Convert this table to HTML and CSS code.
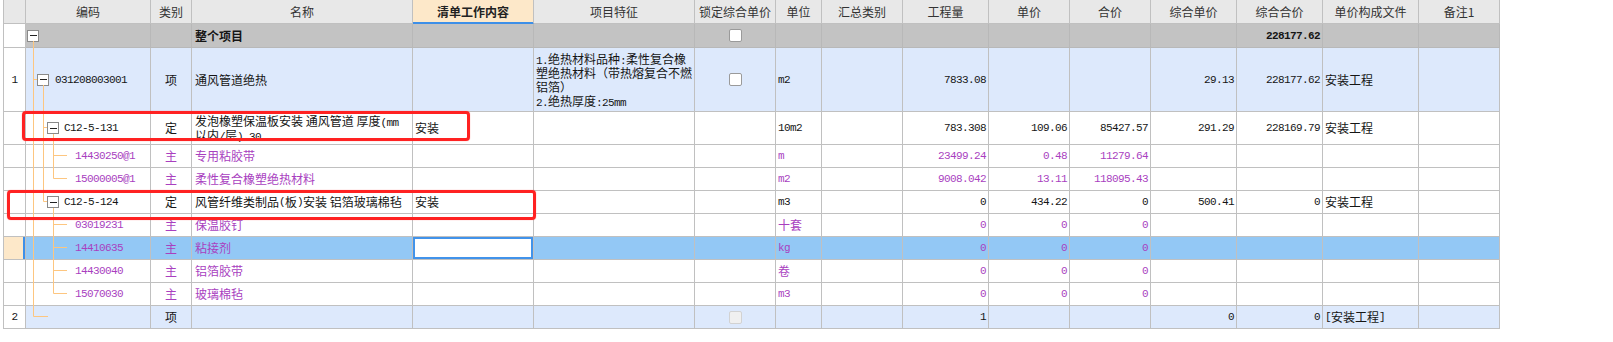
FILE: index.html
```html
<!DOCTYPE html>
<html lang="zh-CN">
<head>
<meta charset="utf-8">
<title>分部分项</title>
<link rel="stylesheet" href="styles.css">
</head>
<body>
<div class="sheet">
  <div class="table">
    <div class="row hdr">
      <div class="c no"></div>
      <div class="c ctr">编码</div>
      <div class="c ctr">类别</div>
      <div class="c ctr">名称</div>
      <div class="c ctr active">清单工作内容</div>
      <div class="c ctr">项目特征</div>
      <div class="c ctr">锁定综合单价</div>
      <div class="c ctr">单位</div>
      <div class="c ctr">汇总类别</div>
      <div class="c ctr">工程量</div>
      <div class="c ctr">单价</div>
      <div class="c ctr">合价</div>
      <div class="c ctr">综合单价</div>
      <div class="c ctr">综合合价</div>
      <div class="c ctr">单价构成文件</div>
      <div class="c ctr">备注1</div>
    </div>

    <div class="row gray">
      <div class="c no"></div>
      <div class="c code"><span class="tg l0"></span></div>
      <div class="c"></div>
      <div class="c name b">整个项目</div>
      <div class="c"></div>
      <div class="c"></div>
      <div class="c ctr"><span class="cb"></span></div>
      <div class="c"></div>
      <div class="c"></div>
      <div class="c"></div>
      <div class="c"></div>
      <div class="c"></div>
      <div class="c"></div>
      <div class="c r b"><span class="n">228177.62</span></div>
      <div class="c"></div>
      <div class="c"></div>
    </div>

    <div class="row blue tall">
      <div class="c no"><span class="n">1</span></div>
      <div class="c code"><span class="tg l1"></span><span class="n t1">031208003001</span></div>
      <div class="c ctr">项</div>
      <div class="c name">通风管道绝热</div>
      <div class="c"></div>
      <div class="c"><div class="ml"><span class="n">1.</span>绝热材料品种<span class="n">:</span>柔性复合橡<br>塑绝热材料（带热熔复合不燃<br>铝箔）<br><span class="n">2.</span>绝热厚度<span class="n">:25mm</span></div></div>
      <div class="c ctr"><span class="cb"></span></div>
      <div class="c"><span class="n">m2</span></div>
      <div class="c"></div>
      <div class="c r"><span class="n">7833.08</span></div>
      <div class="c"></div>
      <div class="c"></div>
      <div class="c r"><span class="n">29.13</span></div>
      <div class="c r"><span class="n">228177.62</span></div>
      <div class="c">安装工程</div>
      <div class="c"></div>
    </div>

    <div class="row mid">
      <div class="c no"></div>
      <div class="c code"><span class="tg l2"></span><span class="n t2">C12-5-131</span></div>
      <div class="c ctr">定</div>
      <div class="c name"><div class="ml">发泡橡塑保温板安装 通风管道 厚度<span class="n">(mm</span><br>以内<span class="n">/</span>层<span class="n">) 30</span></div></div>
      <div class="c">安装</div>
      <div class="c"></div>
      <div class="c"></div>
      <div class="c"><span class="n">10m2</span></div>
      <div class="c"></div>
      <div class="c r"><span class="n">783.308</span></div>
      <div class="c r"><span class="n">109.06</span></div>
      <div class="c r"><span class="n">85427.57</span></div>
      <div class="c r"><span class="n">291.29</span></div>
      <div class="c r"><span class="n">228169.79</span></div>
      <div class="c">安装工程</div>
      <div class="c"></div>
    </div>

    <div class="row mat">
      <div class="c no"></div>
      <div class="c code leaf"><span class="n">14430250@1</span></div>
      <div class="c ctr">主</div>
      <div class="c name">专用粘胶带</div>
      <div class="c"></div>
      <div class="c"></div>
      <div class="c"></div>
      <div class="c"><span class="n">m</span></div>
      <div class="c"></div>
      <div class="c r"><span class="n">23499.24</span></div>
      <div class="c r"><span class="n">0.48</span></div>
      <div class="c r"><span class="n">11279.64</span></div>
      <div class="c"></div>
      <div class="c"></div>
      <div class="c"></div>
      <div class="c"></div>
    </div>

    <div class="row mat">
      <div class="c no"></div>
      <div class="c code leaf"><span class="n">15000005@1</span></div>
      <div class="c ctr">主</div>
      <div class="c name">柔性复合橡塑绝热材料</div>
      <div class="c"></div>
      <div class="c"></div>
      <div class="c"></div>
      <div class="c"><span class="n">m2</span></div>
      <div class="c"></div>
      <div class="c r"><span class="n">9008.042</span></div>
      <div class="c r"><span class="n">13.11</span></div>
      <div class="c r"><span class="n">118095.43</span></div>
      <div class="c"></div>
      <div class="c"></div>
      <div class="c"></div>
      <div class="c"></div>
    </div>

    <div class="row">
      <div class="c no"></div>
      <div class="c code"><span class="tg l2"></span><span class="n t2">C12-5-124</span></div>
      <div class="c ctr">定</div>
      <div class="c name">风管纤维类制品<span class="n">(</span>板<span class="n">)</span>安装 铝箔玻璃棉毡</div>
      <div class="c">安装</div>
      <div class="c"></div>
      <div class="c"></div>
      <div class="c"><span class="n">m3</span></div>
      <div class="c"></div>
      <div class="c r"><span class="n">0</span></div>
      <div class="c r"><span class="n">434.22</span></div>
      <div class="c r"><span class="n">0</span></div>
      <div class="c r"><span class="n">500.41</span></div>
      <div class="c r"><span class="n">0</span></div>
      <div class="c">安装工程</div>
      <div class="c"></div>
    </div>

    <div class="row mat">
      <div class="c no"></div>
      <div class="c code leaf"><span class="n">03019231</span></div>
      <div class="c ctr">主</div>
      <div class="c name">保温胶钉</div>
      <div class="c"></div>
      <div class="c"></div>
      <div class="c"></div>
      <div class="c">十套</div>
      <div class="c"></div>
      <div class="c r"><span class="n">0</span></div>
      <div class="c r"><span class="n">0</span></div>
      <div class="c r"><span class="n">0</span></div>
      <div class="c"></div>
      <div class="c"></div>
      <div class="c"></div>
      <div class="c"></div>
    </div>

    <div class="row mat sel">
      <div class="c no"></div>
      <div class="c code leaf"><span class="n">14410635</span></div>
      <div class="c ctr">主</div>
      <div class="c name">粘接剂</div>
      <div class="c edit"></div>
      <div class="c"></div>
      <div class="c"></div>
      <div class="c"><span class="n">kg</span></div>
      <div class="c"></div>
      <div class="c r"><span class="n">0</span></div>
      <div class="c r"><span class="n">0</span></div>
      <div class="c r"><span class="n">0</span></div>
      <div class="c"></div>
      <div class="c"></div>
      <div class="c"></div>
      <div class="c"></div>
    </div>

    <div class="row mat">
      <div class="c no"></div>
      <div class="c code leaf"><span class="n">14430040</span></div>
      <div class="c ctr">主</div>
      <div class="c name">铝箔胶带</div>
      <div class="c"></div>
      <div class="c"></div>
      <div class="c"></div>
      <div class="c">卷</div>
      <div class="c"></div>
      <div class="c r"><span class="n">0</span></div>
      <div class="c r"><span class="n">0</span></div>
      <div class="c r"><span class="n">0</span></div>
      <div class="c"></div>
      <div class="c"></div>
      <div class="c"></div>
      <div class="c"></div>
    </div>

    <div class="row mat">
      <div class="c no"></div>
      <div class="c code leaf"><span class="n">15070030</span></div>
      <div class="c ctr">主</div>
      <div class="c name">玻璃棉毡</div>
      <div class="c"></div>
      <div class="c"></div>
      <div class="c"></div>
      <div class="c"><span class="n">m3</span></div>
      <div class="c"></div>
      <div class="c r"><span class="n">0</span></div>
      <div class="c r"><span class="n">0</span></div>
      <div class="c r"><span class="n">0</span></div>
      <div class="c"></div>
      <div class="c"></div>
      <div class="c"></div>
      <div class="c"></div>
    </div>

    <div class="row blue">
      <div class="c no"><span class="n">2</span></div>
      <div class="c code"></div>
      <div class="c ctr">项</div>
      <div class="c name"></div>
      <div class="c"></div>
      <div class="c"></div>
      <div class="c ctr"><span class="cb off"></span></div>
      <div class="c"></div>
      <div class="c"></div>
      <div class="c r"><span class="n">1</span></div>
      <div class="c"></div>
      <div class="c"></div>
      <div class="c r"><span class="n">0</span></div>
      <div class="c r"><span class="n">0</span></div>
      <div class="c"><span class="n">[</span>安装工程<span class="n">]</span></div>
      <div class="c"></div>
    </div>
  </div>

  <svg class="tree" width="80" height="330" viewBox="0 0 80 330" aria-hidden="true">
    <path d="M33.5 41V316.5H48 M33 79.5H37 M43.5 85V201.5H47 M43 127.5H47 M53.5 134V178.5H67 M53 155.5H67 M53.5 208V293.5H67 M53 224.5H67 M53 247.5H67 M53 270.5H67" stroke="#fdc680" stroke-width="1" fill="none"/>
  </svg>

  <div class="mark m1"></div>
  <div class="mark m2"></div>
</div>
</body>
</html>
```

FILE: styles.css
```css
* { box-sizing: border-box; }

html, body {
  margin: 0;
  background: #fff;
}

body {
  font-family: "Noto Sans CJK SC", "Noto Sans", sans-serif;
  font-size: 12px;
  color: #151515;
}

.sheet {
  position: relative;
  width: 1613px;
  height: 342px;
  padding-left: 3px;
}

.table {
  width: 1497px;
  border-left: 1px solid #c0c0c0;
}

.row {
  display: grid;
  grid-template-columns: 22px 125px 41px 221px 121px 161px 81px 46px 81px 86px 81px 81px 86px 86px 96px 81px;
  height: 23px;
  background: #fff;
}

.row.hdr,
.row.gray { height: 24px; }
.row.tall { height: 64px; }
.row.mid { height: 33px; }

.c {
  display: flex;
  align-items: center;
  padding: 0 2px 0 2px;
  border-right: 1px solid #c0c0c0;
  border-bottom: 1px solid #c0c0c0;
  white-space: nowrap;
  overflow: hidden;
  line-height: 14px;
}

.c.ctr { justify-content: center; padding: 0; }
.c.r { justify-content: flex-end; padding-right: 2px; }
.c.name { padding-left: 3px; }
.c.code { padding-left: 0; }
.c.code.leaf { padding-left: 49px; }
.c.no { justify-content: center; padding: 0; background: #fff; }

.b { font-weight: 700; }

.n {
  font-family: "Liberation Mono", monospace;
  font-size: 11px;
  letter-spacing: -0.6px;
}

.ml { line-height: 14px; }
.ml .n { line-height: 0; }

/* header */
.hdr { background: #e8e8e8; color: #333; }
.hdr .c.no { background: #e8e8e8; }
.hdr .c.active {
  background: #fde8c9;
  font-weight: 700;
  color: #222;
  border-bottom-color: #3d8fe8;
  box-shadow: inset 0 -1px 0 #3d8fe8;
}

/* row tones */
.gray { background: #c3c3c3; }
.gray .c { border-right-color: #b8b8b8; border-bottom-color: #b8b8b8; }
.gray .c.no { border-right-color: #c0c0c0; border-bottom-color: #c0c0c0; }
.blue { background: #dde9fc; }
.mat { color: #a93fbf; }
.sel { background: #93c8f5; }
.sel .c.no { background: #fde8c9; box-shadow: inset -2px 0 0 #3d8fe8; }
.sel .c.edit { background: #fff; box-shadow: inset 0 0 0 2px #4193ea; }

/* tree toggles */
.tg {
  display: inline-flex;
  align-items: center;
  justify-content: center;
  flex: none;
  width: 12px;
  height: 12px;
  border: 1px solid #8a8a8a;
  background: #fff;
}
.tg::before {
  content: "";
  width: 7px;
  height: 1px;
  background: #222;
}
.tg.l0 { margin-left: 1px; }
.tg.l1 { margin-left: 11px; }
.tg.l2 { margin-left: 21px; }
.t1 { margin-left: 6px; }
.t2 { margin-left: 5px; }

/* checkbox */
.cb {
  display: inline-block;
  width: 13px;
  height: 13px;
  border: 1px solid #9a9a9a;
  border-radius: 2px;
  background: #fff;
}
.cb.off { background: #f0f0f0; border-color: #d2d2d2; }

/* overlays */
.tree {
  position: absolute;
  left: 0;
  top: 0;
  pointer-events: none;
}

.mark {
  position: absolute;
  border: 3px solid #ff2222;
  border-radius: 4px;
  box-shadow: 0 0 1px rgba(255, 0, 0, 0.6);
  pointer-events: none;
}
.m1 { left: 22px; top: 111px; width: 448px; height: 30px; }
.m2 { left: 7px; top: 190px; width: 529px; height: 30px; }
```
